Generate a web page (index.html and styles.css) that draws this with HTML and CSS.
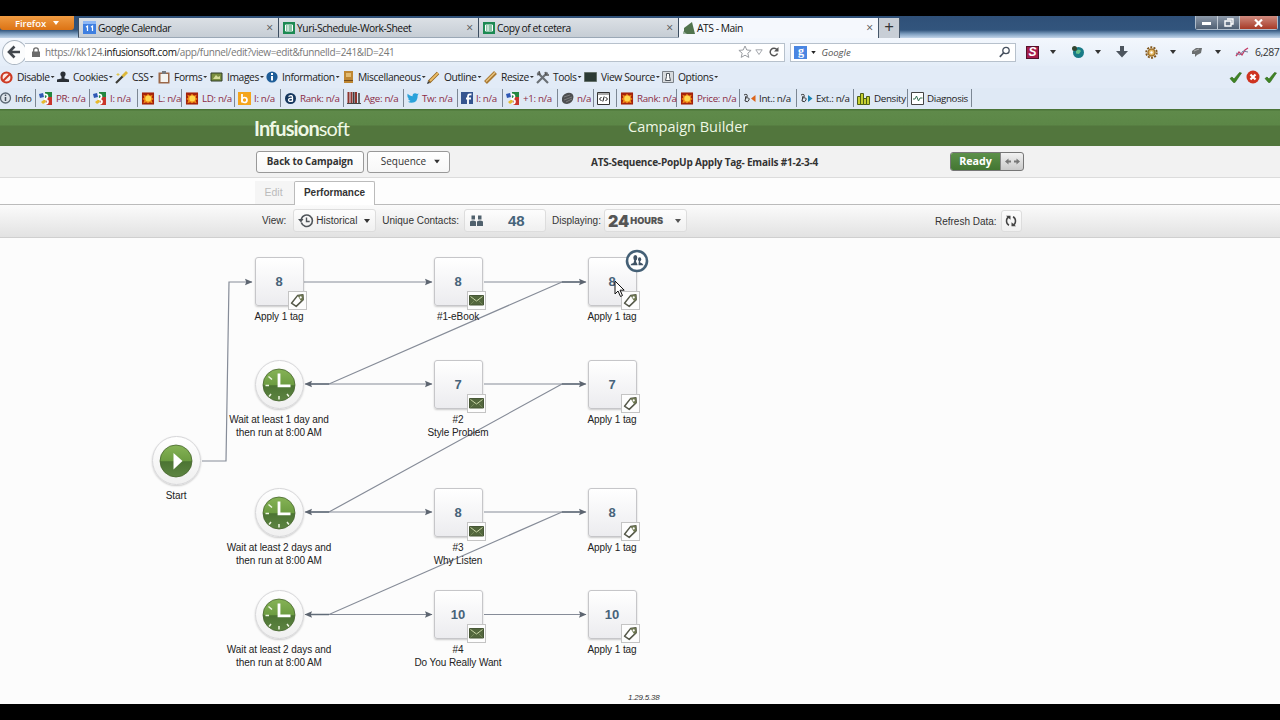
FILE: index.html
```
<!DOCTYPE html>
<html lang="en">
<head>
    <meta charset="UTF-8">
    <title>ATS - Main</title>
    <link rel="stylesheet" href="styles.css">
</head>
<body>
    <!-- Shared icons -->
    <svg class="defs" width="0" height="0">
        <defs>
            <linearGradient id="green" x1="0" y1="0" x2="0" y2="1">
                <stop offset="0" stop-color="#86b356"/>
                <stop offset="0.5" stop-color="#6c9c41"/>
                <stop offset="0.52" stop-color="#4c7433"/>
                <stop offset="1" stop-color="#5d8542"/>
            </linearGradient>
            <marker id="arrow" markerUnits="userSpaceOnUse" markerWidth="8" markerHeight="8" refX="7" refY="4" orient="auto">
                <path d="M0 .8L7.5 4 0 7.2 1.2 4z" fill="#5d6570"/>
            </marker>
            <symbol id="i-tag" viewBox="0 0 17 17">
                <path d="M2.500 11.200L8.500 3.600l5.400-.8.3 4.800-7 6.800z" fill="#fff" stroke="#56594a" stroke-width="1.500" stroke-linejoin="round"/>
                <path d="M8.500 3.400l5.500-.8.300 5-2 2z" fill="#6c7650"/>
                <circle cx="11.700" cy="5.400" r="1.100" fill="#fff"/>
            </symbol>
            <symbol id="i-mail" viewBox="0 0 17 17">
                <path d="M1.500 3.500h14v9.500h-14z" fill="#53673d" stroke="#465635"/>
                <path d="M2.500 4.500l6 4.500 6-4.500" fill="none" stroke="#c6d3a4"/>
                <path d="M2.500 12.500l4-4M14.500 12.500l-4-4" fill="none" stroke="#8a9c6c" stroke-width=".6"/>
            </symbol>
            <symbol id="i-clock" viewBox="0 0 34 34">
                <circle cx="17" cy="17" r="16" fill="url(#green)" stroke="#48662f" stroke-width=".8"/>
                <path d="M17 5.500v12.300h11.500" fill="none" stroke="#fff" stroke-width="2.800"/>
                <path d="M3.500 17.500h3.500M6.500 8.500l3.500 3M17 28v3.500M9 26l-1.900 2.500M25 26l1.900 2.500" stroke="#eef5e2" stroke-width="1.500"/>
            </symbol>
            <symbol id="i-play" viewBox="0 0 34 34">
                <circle cx="17" cy="17" r="16" fill="url(#green)" stroke="#48662f" stroke-width=".8"/>
                <path d="M14.500 9v16.500L23.500 17z" fill="#fff"/>
            </symbol>
            <symbol id="i-sheet" viewBox="0 0 12 12">
                <path d="M0 0h12v12H0z" fill="#1d8a53"/>
                <path d="M2.500 3h7v6h-7zM2.500 5h7M2.500 7h7M5 3v6" fill="none" stroke="#fff"/>
            </symbol>
            <symbol id="i-google" viewBox="0 0 14 13">
                <path d="M6 0h7v7H6z" fill="#23863f"/>
                <path d="M8 5h5v8H7z" fill="#c9352b"/>
                <path d="M0 2l4-1 1 4-4 1z" fill="#2f58b5"/>
                <path d="M2 10l4-3 1 3-3 2z" fill="#e7b92c"/>
                <path d="M5 2.500q3.500-.5 3.500 2T5 7q4 .5 4 2.500T6.500 12" fill="none" stroke="#fff" stroke-width="1.700"/>
            </symbol>
            <symbol id="i-flare" viewBox="0 0 14 14">
                <path d="M.5.500h13v13H.5z" fill="#a5220b"/>
                <path d="M2 3l3 1 2-2 2 2 3-1-1 3 2 1.500-2 1.500 1 3-3-1-2 1-2-1-3 1 1-3-2-1.500L3 6z" fill="#f08a16"/>
                <circle cx="7.300" cy="7" r="3.200" fill="#ffd84e"/>
            </symbol>
            <symbol id="i-check" viewBox="0 0 13 13">
                <path d="M1 7.500l2-1.500 2 2L10.500 1.500 12.500 2 6 11.500H4.500z" fill="#3f8424" stroke="#2f671a" stroke-width=".6"/>
            </symbol>
            <symbol id="i-down" viewBox="0 0 6 4">
                <path d="M0 0h6L3 4z" fill="currentColor"/>
            </symbol>
        </defs>
    </svg>

    <div class="screen">
        <!-- Browser tabs -->
        <div class="tabstrip">
            <div class="firefox">Firefox <svg width="6" height="4"><use href="#i-down"/></svg></div>
            <div class="tab">
                <svg width="13" height="13" viewBox="0 0 13 13"><path d="M0 0h13v13H0z" fill="#3f7fe0"/><path d="M0 0h13v3H0z" fill="#8db7f5"/><path d="M3 6l1.500-1v5M8 6l1.500-1v5" fill="none" stroke="#fff" stroke-width="1.200"/></svg>
                <span>Google Calendar</span><i>×</i>
            </div>
            <div class="tab">
                <svg width="12" height="12"><use href="#i-sheet"/></svg>
                <span>Yuri-Schedule-Work-Sheet</span><i>×</i>
            </div>
            <div class="tab">
                <svg width="12" height="12"><use href="#i-sheet"/></svg>
                <span>Copy of et cetera</span><i>×</i>
            </div>
            <div class="tab active">
                <svg width="12" height="12" viewBox="0 0 12 12"><path d="M1 12V6l8-6 3 12z" fill="#51744e"/><path d="M0 9l4 3H0z" fill="#9bb2a0"/></svg>
                <span>ATS - Main</span><i>×</i>
            </div>
            <div class="new-tab">+</div>
            <div class="window-buttons">
                <span><svg width="9" height="8"><path d="M0 3h9v3H0z" fill="#fff"/></svg></span>
                <span><svg width="10" height="9"><path d="M3 1h6v5H7M1 3h6v5H1z" fill="none" stroke="#fff" stroke-width="1.400"/></svg></span>
                <span class="close"><svg width="9" height="8"><path d="M1 .5l7 7M8 .5l-7 7" stroke="#fff" stroke-width="2.200"/></svg></span>
            </div>
        </div>

        <!-- Address bar -->
        <div class="navbar">
            <div class="back"><svg width="14" height="14" viewBox="0 0 14 14"><path d="M7.500 1.500L2 7l5.500 5.500M2 7h11" fill="none" stroke="#41464c" stroke-width="2.600"/></svg></div>
            <div class="url">
                <svg width="8" height="10" viewBox="0 0 8 10"><path d="M0 4.500h8V10H0z" fill="#6c6c6c"/><path d="M1.700 5V3q0-2.200 2.300-2.200T6.300 3v2" fill="none" stroke="#6c6c6c" stroke-width="1.300"/></svg>
                <span>https://kk124.<b>infusionsoft.com</b>/app/funnel/edit?view=edit&amp;funnelId=241&amp;ID=241</span>
                <svg class="star" width="14" height="14" viewBox="0 0 14 14"><path d="M7 1l1.800 4 4.300.4-3.300 2.800 1 4.200L7 10.200l-3.800 2.200 1-4.200L.9 5.400 5.200 5z" fill="#fff" stroke="#9a9da2"/></svg>
                <svg width="8" height="7" viewBox="0 0 8 7"><path d="M.8.800h6.400L4 5.500z" fill="none" stroke="#a5a8ad"/></svg>
                <svg width="10" height="10" viewBox="0 0 10 10"><path d="M8.500 6.500A3.800 3.800 0 1 1 8 2.700" fill="none" stroke="#555" stroke-width="1.500"/><path d="M9.500 0v4.500H5z" fill="#555"/></svg>
            </div>
            <div class="search">
                <div class="g">g</div>
                <svg width="5" height="3"><use href="#i-down"/></svg>
                <em>Google</em>
                <svg width="12" height="12" viewBox="0 0 12 12"><circle cx="7" cy="4.500" r="3.200" fill="none" stroke="#46505e" stroke-width="1.300"/><path d="M4.500 7L.8 10.800" stroke="#46505e" stroke-width="1.700"/></svg>
            </div>
            <div class="addons">
                <div class="s-icon">S</div>
                <svg width="6" height="4"><use href="#i-down"/></svg>
                <svg width="14" height="14" viewBox="0 0 14 14"><circle cx="7.500" cy="7.500" r="5.500" fill="#197b87"/><path d="M5 6q3-3 5 0l-2 3-3-.5z" fill="#65c08b"/><circle cx="3.500" cy="3.500" r="2.500" fill="#33452f"/></svg>
                <svg width="6" height="4"><use href="#i-down"/></svg>
                <svg width="12" height="12" viewBox="0 0 12 12"><path d="M4 0h4v5h4l-6 6.500L0 5h4z" fill="#4d555e"/></svg>
                <svg width="13" height="13" viewBox="0 0 13 13"><circle cx="6.500" cy="6.500" r="5.300" fill="none" stroke="#80561c" stroke-width="1.800" stroke-dasharray="2 1.300"/><circle cx="6.500" cy="6.500" r="3.500" fill="#e3b763" stroke="#a3742b" stroke-width="1.500"/><circle cx="6.500" cy="6.500" r="1.200" fill="#fff"/></svg>
                <svg width="6" height="4"><use href="#i-down"/></svg>
                <svg width="12" height="10" viewBox="0 0 12 10"><path d="M1 4l4-3 6 0-1 5-4 2-2 2 0-3-3 0z" fill="#6c6f70"/><path d="M3 4l5-2" stroke="#aaa"/></svg>
                <svg width="6" height="4"><use href="#i-down"/></svg>
                <svg width="14" height="11" viewBox="0 0 14 11"><path d="M1 9l3-4 3 3 3-5 3-2" fill="none" stroke="#c23a64" stroke-width="1.300"/><path d="M1 6l4 2 3-4 5 1" fill="none" stroke="#777d9c"/></svg>
                <span>6,287</span>
            </div>
        </div>

        <!-- Web developer toolbar -->
        <div class="devbar">
            <div><svg width="13" height="13" viewBox="0 0 13 13"><circle cx="6.500" cy="6.500" r="5" fill="#fbe9e5" stroke="#cd3a23" stroke-width="2.200"/><path d="M3 10l7-7" stroke="#cd3a23" stroke-width="2"/></svg>Disable<s></s></div>
            <div><svg width="12" height="12" viewBox="0 0 12 12"><circle cx="6" cy="3" r="2.600" fill="#2a2f35"/><path d="M4.500 5h3v2.500l4.500 1V11H0V8.500l4.500-1z" fill="#2a2f35"/></svg>Cookies<s></s></div>
            <div><svg width="13" height="13" viewBox="0 0 13 13"><path d="M1 12L8 5" stroke="#3b3b35" stroke-width="2.200"/><path d="M7.500 5.500L12 1" stroke="#dcb73a" stroke-width="2.800"/><path d="M3 2v3M1.500 3.500h3" stroke="#dfc54f"/></svg>CSS<s></s></div>
            <div><svg width="12" height="13" viewBox="0 0 12 13"><path d="M.5 1.500h11v11H.5z" fill="#9b6748"/><path d="M2.500 3h7.500v8H2.500z" fill="#f4f4f1"/><path d="M4 0h4v3H4z" fill="#767b80"/></svg>Forms<s></s></div>
            <div><svg width="13" height="10" viewBox="0 0 13 10"><path d="M1 1h11v8H1z" fill="#7a8f40" stroke="#2f3c28"/><path d="M3 7l3-4 2 2 2-1v3z" fill="#d4dc9a"/></svg>Images<s></s></div>
            <div><svg width="12" height="12" viewBox="0 0 12 12"><circle cx="6" cy="6" r="5.600" fill="#1e5d98"/><path d="M5 5h2v4.500H5zM5 2h2v2H5z" fill="#fff"/></svg>Information<s></s></div>
            <div><svg width="11" height="12" viewBox="0 0 11 12"><path d="M1 0h9v12H1z" fill="#bf8733"/><path d="M3 2h5v4H3z" fill="#e2bb72"/><path d="M1 9.500h9" stroke="#744b19"/></svg>Miscellaneous<s></s></div>
            <div><svg width="13" height="13" viewBox="0 0 13 13"><path d="M2 11l9-9" stroke="#8e621f" stroke-width="3.400"/><path d="M3 10l8-8" stroke="#edbd65" stroke-width="1.800"/><path d="M0 13l1-3 2 2z" fill="#333"/></svg>Outline<s></s></div>
            <div><svg width="13" height="13" viewBox="0 0 13 13"><path d="M1.500 11.500l10-10" stroke="#a87832" stroke-width="4"/><path d="M2 10.500l9-9" stroke="#e9c480" stroke-width="1.500"/></svg>Resize<s></s></div>
            <div><svg width="13" height="13" viewBox="0 0 13 13"><path d="M1.500 1.500L12 12M11.500 1.500L1 12" stroke="#6b7075" stroke-width="2.200"/><path d="M9 1l1 3 3 0M1 4l3-1-1-3" fill="none" stroke="#555" stroke-width="1.300"/></svg>Tools<s></s></div>
            <div><svg width="13" height="10" viewBox="0 0 13 10"><path d="M.5.500h12v9H.5z" fill="#2b3a34" stroke="#64706a"/></svg>View Source<s></s></div>
            <div><svg width="12" height="12" viewBox="0 0 12 12"><path d="M.5.500h11v11H.5z" fill="#d7dadd" stroke="#7b8188"/><path d="M4.500 2.500h3v3l1 4h-5l1-4z" fill="#fff" stroke="#4d535a"/></svg>Options<s></s></div>
            <div class="validate">
                <svg width="13" height="13"><use href="#i-check"/></svg>
                <svg width="14" height="14" viewBox="0 0 14 14"><circle cx="7" cy="7" r="6.500" fill="#ce3320"/><path d="M4.500 4.500l5 5M9.500 4.500l-5 5" stroke="#fff" stroke-width="2.200"/></svg>
                <svg width="13" height="13"><use href="#i-check"/></svg>
            </div>
        </div>

        <!-- SEO toolbar -->
        <div class="seobar">
            <div class="dark"><svg width="12" height="12" viewBox="0 0 12 12"><circle cx="5.500" cy="6" r="5" fill="#dfe5ec" stroke="#5b6774" stroke-width="1.300"/><path d="M5.500 5v4M5.500 2.500v1.500" stroke="#45515d" stroke-width="1.500"/></svg>Info</div>
            <div><svg width="14" height="13"><use href="#i-google"/></svg>PR: n/a</div>
            <div><svg width="14" height="13"><use href="#i-google"/></svg>I: n/a</div>
            <div><svg width="14" height="13"><use href="#i-flare"/></svg>L: n/a</div>
            <div><svg width="14" height="13"><use href="#i-flare"/></svg>LD: n/a</div>
            <div><svg width="13" height="13" viewBox="0 0 13 13"><path d="M0 0h13v13H0z" fill="#f4a51c"/><path d="M4 2v8.500" stroke="#fff" stroke-width="1.800"/><circle cx="6.500" cy="8" r="2.500" fill="none" stroke="#fff" stroke-width="1.700"/></svg>I: n/a</div>
            <div><svg width="13" height="13" viewBox="0 0 13 13"><circle cx="6.500" cy="6.500" r="5.500" fill="#15375e"/><path d="M4.500 4.500q4-2 4 1V9q-4 1-4-1t4-1.500" fill="none" stroke="#fff" stroke-width="1.300"/></svg>Rank: n/a</div>
            <div><svg width="14" height="12" viewBox="0 0 14 12"><path d="M1.500 0v11M4.500 0v11M9 0v11" stroke="#8f352e" stroke-width="2"/><path d="M6.800 0v11M12 1v10" stroke="#393939" stroke-width="1.500"/><path d="M0 11.500h14" stroke="#444"/></svg>Age: n/a</div>
            <div><svg width="12" height="10" viewBox="0 0 12 10"><path d="M.5.800q2.500 2.500 5 2.400Q5.500.5 8 .3q1.500 0 2 .8l1.700-.5-1 1.600q.2 7.400-6 7.600-2.300 0-4.300-1.200 2 .2 3-.9Q1.400 7.500 1 5.500h1.200Q.3 4.500.4 2.900z" fill="#2ba2da"/></svg>Tw: n/a</div>
            <div><svg width="12" height="12" viewBox="0 0 12 12"><path d="M0 0h12v12H0z" fill="#34548f"/><path d="M10.500 2.500Q7 1.800 7 4.500V12M5 6.500h5" fill="none" stroke="#fff" stroke-width="1.800"/></svg>I: n/a</div>
            <div><svg width="14" height="13"><use href="#i-google"/></svg>+1: n/a</div>
            <div><svg width="13" height="13" viewBox="0 0 13 13"><path d="M1 9Q0 3 6 1q6-1 6.500 4Q12 11 6 12q-4 0-5-3z" fill="#4d4f51"/><path d="M3 5l6-2M3 8l8-3M5 10l6-3" stroke="#888" stroke-width=".8"/></svg>n/a</div>
            <div class="code"><svg width="13" height="13" viewBox="0 0 13 13"><path d="M.5.500h12v12H.5z" fill="#fff" stroke="#333"/><path d="M.5 2h12" stroke="#555"/><path d="M4.500 5L2.500 7l2 2M8.500 5l2 2-2 2M7.200 4.500l-1.400 5" fill="none" stroke="#111"/></svg></div>
            <div><svg width="14" height="13"><use href="#i-flare"/></svg>Rank: n/a</div>
            <div><svg width="14" height="13"><use href="#i-flare"/></svg>Price: n/a</div>
            <div class="dark"><svg width="13" height="11" viewBox="0 0 13 11"><path d="M1 2q4-2 3 2M2 5q5-1 4 2t-4 1l1-5" fill="none" stroke="#333"/><path d="M12.500 2v7L8 5.500z" fill="#dc651b"/></svg>Int.: n/a</div>
            <div class="dark"><svg width="13" height="11" viewBox="0 0 13 11"><path d="M1 2q4-2 3 2M2 5q5-1 4 2t-4 1l1-5" fill="none" stroke="#333"/><path d="M8 2v7l4.500-3.500z" fill="#1984b4"/></svg>Ext.: n/a</div>
            <div class="dark"><svg width="14" height="13" viewBox="0 0 14 13"><path d="M.5 4.500h3v8h-3zM3.500 1.500h3v11h-3zM6.500 6.500h3v6h-3zM9.500 4.500h3v8h-3z" fill="#c6cf31" stroke="#4d5e18"/></svg>Density</div>
            <div class="dark"><svg width="13" height="13" viewBox="0 0 13 13"><path d="M.5.500h12v12H.5z" fill="#fff" stroke="#444"/><path d="M2 7h2l1.500-3 2 5L9 6h2.500" fill="none" stroke="#356e51"/></svg>Diagnosis</div>
        </div>

        <!-- Application -->
        <header class="app-header">
            <div class="logo"><b>Infusion</b>soft</div>
            <h1>Campaign Builder</h1>
        </header>

        <div class="title-bar">
            <button class="btn bold">Back to Campaign</button>
            <button class="btn sequence">Sequence <svg width="6" height="5" viewBox="0 0 6 4"><use href="#i-down"/></svg></button>
            <h2>ATS-Sequence-PopUp Apply Tag- Emails #1-2-3-4</h2>
            <div class="status">
                <span>Ready</span>
                <div class="toggle"><svg width="15" height="7" viewBox="0 0 15 7"><path d="M0 3.500L3.500.500v2H6v2H3.500v2zM15 3.500L11.500.500v2H9v2h2.500v2z" fill="#777"/></svg></div>
            </div>
        </div>

        <div class="page-tabs">
            <div class="page-tab">Edit</div>
            <div class="page-tab current">Performance</div>
        </div>

        <div class="filters">
            <label>View:</label>
            <div class="box historical">
                <svg width="16" height="14" viewBox="0 0 16 14"><path d="M3.300 8.500A5.700 5.700 0 1 0 3.300 5" fill="none" stroke="#50555a" stroke-width="1.600"/><path d="M0 5h5.500L3 8.500z" fill="#50555a"/><path d="M8.500 3.500V7.500h3.200" fill="none" stroke="#50555a" stroke-width="1.400"/></svg>
                <span>Historical</span>
                <svg width="6" height="4"><use href="#i-down"/></svg>
            </div>
            <label>Unique Contacts:</label>
            <div class="box contacts">
                <svg width="13" height="12" viewBox="0 0 13 12"><path d="M1.500.500h3.500v4H1.500zM8 .500h3.500v4H8zM0 6.500q3-2 6 0V11H0zM7 6.500q3-2 6 0V11H7z" fill="#50616d"/></svg>
                <strong>48</strong>
            </div>
            <label>Displaying:</label>
            <div class="box hours"><b>24</b><span>HOURS</span><svg width="6" height="4"><use href="#i-down"/></svg></div>
            <div class="refresh">
                <label>Refresh Data:</label>
                <div class="box"><svg width="12" height="12" viewBox="0 0 12 12"><path d="M4 10.200Q1.500 9 1.500 6t2.300-4M8 1.800Q10.500 3 10.500 6T8.200 10" fill="none" stroke="#444" stroke-width="1.500"/><path d="M1 .800h4.500v4zM11 11.200H6.500v-4z" fill="#444"/></svg></div>
            </div>
        </div>

        <!-- Campaign canvas -->
        <main class="canvas">
            <svg class="wires" width="1280" height="466" viewBox="0 238 1280 466">
                <path d="M202 461H226L229 282H252"/>
                <path d="M304 282H432"/>
                <path d="M484 282H586"/>
                <path d="M329 384H432"/>
                <path d="M484 384H586"/>
                <path d="M329 512H432"/>
                <path d="M484 512H586"/>
                <path d="M329 614.500H432"/>
                <path d="M484 614.500H586"/>
                <path d="M562 282L329 384H305"/>
                <path d="M562 384L329 512H305"/>
                <path d="M562 512L329 614.500H305"/>
                <path class="joint" d="M562 282h18M562 384h18M562 512h18M329 384h-18M329 512h-18M329 614.500h-18"/>
            </svg>

            <div class="node round start"><div class="shape"><svg width="34" height="34"><use href="#i-play"/></svg></div><p>Start</p></div>

            <div class="node col-1 row-1"><div class="shape">8<span><svg width="17" height="17"><use href="#i-tag"/></svg></span></div><p>Apply 1 tag</p></div>
            <div class="node col-2 row-1"><div class="shape">8<span><svg width="17" height="17"><use href="#i-mail"/></svg></span></div><p>#1-eBook</p></div>
            <div class="node col-3 row-1">
                <div class="shape">8<span><svg width="17" height="17"><use href="#i-tag"/></svg></span></div><p>Apply 1 tag</p>
                <svg class="people" width="24" height="24" viewBox="0 0 24 24"><circle cx="12" cy="12" r="10" fill="#fff" stroke="#446076" stroke-width="2.600"/><ellipse cx="10.300" cy="8.800" rx="2" ry="2.700" fill="#3f5264"/><ellipse cx="14.600" cy="10.300" rx="1.600" ry="2.100" fill="#3f5264"/><path d="M9.600 10h1.500v2.700l1.400 2.800v.8h-7q.3-1.800 3-2.300zM14 11h1.200v2.500q2.500.5 3.300 2.800h-5v-1.500z" fill="#3f5264"/></svg>
            </div>

            <div class="node round col-1 row-2"><div class="shape"><svg width="34" height="34"><use href="#i-clock"/></svg></div><p>Wait at least 1 day and<br>then run at 8:00 AM</p></div>
            <div class="node col-2 row-2"><div class="shape">7<span><svg width="17" height="17"><use href="#i-mail"/></svg></span></div><p>#2<br>Style Problem</p></div>
            <div class="node col-3 row-2"><div class="shape">7<span><svg width="17" height="17"><use href="#i-tag"/></svg></span></div><p>Apply 1 tag</p></div>

            <div class="node round col-1 row-3"><div class="shape"><svg width="34" height="34"><use href="#i-clock"/></svg></div><p>Wait at least 2 days and<br>then run at 8:00 AM</p></div>
            <div class="node col-2 row-3"><div class="shape">8<span><svg width="17" height="17"><use href="#i-mail"/></svg></span></div><p>#3<br>Why Listen</p></div>
            <div class="node col-3 row-3"><div class="shape">8<span><svg width="17" height="17"><use href="#i-tag"/></svg></span></div><p>Apply 1 tag</p></div>

            <div class="node round col-1 row-4"><div class="shape"><svg width="34" height="34"><use href="#i-clock"/></svg></div><p>Wait at least 2 days and<br>then run at 8:00 AM</p></div>
            <div class="node col-2 row-4"><div class="shape">10<span><svg width="17" height="17"><use href="#i-mail"/></svg></span></div><p>#4<br>Do You Really Want</p></div>
            <div class="node col-3 row-4"><div class="shape">10<span><svg width="17" height="17"><use href="#i-tag"/></svg></span></div><p>Apply 1 tag</p></div>

            <svg class="cursor" width="11" height="18" viewBox="0 0 11 18"><path d="M1 1v13l3-3 2.500 5.500 2-1L6 10.200h4.200z" fill="#fff" stroke="#111"/></svg>
            <div class="version">1.29.5.38</div>
        </main>
    </div>
</body>
</html>
```
FILE: styles.css
```
* {
    box-sizing: border-box;
}

body {
    margin: 0;
    width: 1280px;
    height: 720px;
    overflow: hidden;
    background: #000;
    font-family: "Open Sans", "Noto Sans", sans-serif;
    font-size: 10.5px;
    color: #222;
}

svg {
    display: block;
    flex: none;
}

.defs {
    position: absolute;
}

.screen {
    display: flex;
    flex-direction: column;
    height: 720px;
    padding: 16px 0;
    white-space: nowrap;
}

.screen > * {
    flex: none;
}

/* Browser tabs */
.tabstrip {
    display: flex;
    height: 22px;
    padding-top: 2px;
    background: linear-gradient(#2f5078, #32557d 14px, #7f9fc0 18px, #c3d6ea 22px);
}

.firefox {
    display: flex;
    align-items: center;
    justify-content: center;
    gap: 7px;
    width: 74px;
    height: 14px;
    margin: -2px 4px 0 0;
    background: linear-gradient(#f09b42, #dc7314);
    border-radius: 0 0 3px 3px;
    color: #fff;
    font-weight: 600;
    font-size: 9.5px;
    letter-spacing: -0.1px;
}

.tab {
    display: flex;
    align-items: center;
    gap: 2px;
    width: 200px;
    padding: 0 5px 0 4px;
    background: linear-gradient(#dbe0e5, #c6cdd5);
    border-left: 1px solid #3c4d60;
    border-bottom: 1px solid #9ba8b6;
    color: #111;
}

.tab span {
    flex: 1;
    font-size: 10.3px;
    letter-spacing: -0.45px;
}

.tab i {
    font-style: normal;
    font-size: 12px;
    color: #555;
}

.tab.active {
    background: #f5f8fd;
    border-bottom-color: #f5f8fd;
}

.new-tab {
    width: 22px;
    background: #c8ced6;
    border: solid #45566a;
    border-width: 0 1px;
    font-size: 17px;
    line-height: 18px;
    text-align: center;
    color: #333;
}

.window-buttons {
    display: flex;
    height: 14px;
    margin: -2px 2px 0 auto;
    border: 1px solid #aebccb;
    border-top: 0;
    border-radius: 0 0 3px 3px;
}

.window-buttons span {
    display: flex;
    align-items: center;
    justify-content: center;
    width: 22px;
    background: linear-gradient(#8c99a9, #4f5f73);
    border-right: 1px solid #c1cad4;
}

.window-buttons .close {
    width: 37px;
    background: linear-gradient(#cf8b7f, #a73a27);
    border: 0;
}

/* Address bar */
.navbar {
    display: flex;
    align-items: center;
    height: 28px;
    background: linear-gradient(#f3f7fd, #e4edf8);
}

.back {
    display: flex;
    align-items: center;
    justify-content: center;
    width: 25px;
    height: 25px;
    margin-left: 2px;
    background: #fbfcfd;
    border: 1px solid #a9b4c0;
    border-radius: 50%;
}

.url {
    display: flex;
    align-items: center;
    width: 762px;
    height: 19px;
    margin-left: -2px;
    padding: 0 5px 0 7px;
    background: #fff;
    border: 1px solid #b7c1cc;
    border-left: 0;
    color: #777;
}

.url span {
    flex: 1;
    margin-left: 5px;
    font-size: 10px;
    letter-spacing: -0.36px;
}

.url b {
    font-weight: 400;
    color: #111;
}

.url .star {
    margin-right: 3px;
}

.url .star + svg {
    margin: 0 6px 0 0;
}

.search {
    display: flex;
    align-items: center;
    width: 226px;
    height: 19px;
    margin-left: 5px;
    padding: 0 4px 0 3px;
    background: #fff;
    border: 1px solid #b7c1cc;
}

.search .g {
    width: 13px;
    height: 13px;
    margin-right: 4px;
    background: #4a86e2;
    color: #fff;
    font: bold 12px/10px "Liberation Serif", serif;
    text-align: center;
}

.search em {
    flex: 1;
    margin-left: 5px;
    font-size: 9.5px;
    color: #555;
}

.addons {
    display: grid;
    grid-template-columns: 24px 21px 24px 21px 29px 25px 21px 24px 20px 20px 25px;
    align-items: center;
    margin-left: 10px;
    color: #333;
}

.addons span {
    letter-spacing: -0.5px;
}

.s-icon {
    width: 13px;
    height: 13px;
    background: #a51c4b;
    border: 1px solid #54122b;
    color: #fff;
    font: italic bold 12px/11px "Liberation Sans", sans-serif;
    text-align: center;
}

/* Web developer toolbar */
.devbar {
    display: grid;
    grid-template-columns: 57px 58px 43px 52px 56px 77px 84px 57px 52px 48px 78px 1fr 51px;
    align-items: center;
    height: 22px;
    background: #e2ebf7;
    font-size: 10.3px;
    letter-spacing: -0.4px;
}

.devbar div,
.seobar div {
    display: flex;
    align-items: center;
}

.devbar > div > svg {
    margin-right: 4px;
}

.devbar s {
    width: 4px;
    height: 2px;
    margin-left: 1px;
    background: #333;
    clip-path: polygon(0 0, 100% 0, 50% 100%);
}

.devbar .validate svg {
    margin-right: 4px;
}

/* SEO toolbar */
.seobar {
    display: grid;
    grid-template-columns: 36px 54px 48px 44px 53px 46px 63px 60px 54px 45px 55px 36px 23px 60px 63px 57px 57px 54px 64px;
    height: 21px;
    background: #dfe9f5;
    color: #8b2c46;
    font-size: 9.8px;
    letter-spacing: -0.35px;
}

.seobar div {
    height: 18px;
    border-right: 1px solid #7c8794;
    margin-top: 1px;
}

.seobar svg {
    margin: 0 3px;
}

.seobar div:first-child svg {
    margin-left: 0;
}

.seobar .dark {
    color: #222;
}

/* Green application header */
.app-header {
    display: flex;
    align-items: center;
    height: 37px;
    padding-left: 254px;
    background: linear-gradient(#4b7438 1px, #5f8a4a 2px, #5c8747 16px, #52763d 17px, #52763d);
    color: #eef8e4;
}

.logo {
    width: 374px;
    font: 400 20px/30px Lato, sans-serif;
    letter-spacing: -0.9px;
}

.logo b {
    font-weight: 700;
}

.app-header h1 {
    margin: -2px 0 0;
    font-size: 14.5px;
    font-weight: 400;
}

/* Sequence title and status */
.title-bar {
    display: flex;
    align-items: center;
    height: 32px;
    padding-left: 256px;
    background: #f2f2f2;
    border-bottom: 1px solid #dcdcdc;
}

.btn {
    display: flex;
    align-items: center;
    justify-content: center;
    width: 108px;
    height: 22px;
    padding: 0 0 1px;
    background: linear-gradient(#fff, #f7f7f7);
    border: 1px solid #999;
    border-radius: 3px;
    font: 10px "Open Sans", sans-serif;
    color: #333;
}

.btn.bold {
    font-size: 9.8px;
    font-weight: 700;
    letter-spacing: -0.1px;
}

.sequence {
    gap: 8px;
    width: 83px;
    margin-left: 3px;
    padding-left: 4px;
}

.title-bar h2 {
    width: 359px;
    margin: 0 0 0 141px;
    font-size: 10px;
    font-weight: 700;
    letter-spacing: -0.2px;
    color: #333;
}

.status {
    display: flex;
    width: 74px;
    height: 19px;
    border: 1px solid #777;
    border-radius: 3px;
    overflow: hidden;
    background: linear-gradient(#f2f2f2, #c9c9c9);
}

.status span {
    width: 49px;
    background: linear-gradient(#5c914a, #437632);
    color: #fff;
    font-size: 10.7px;
    font-weight: 700;
    line-height: 17px;
    text-align: center;
}

.toggle {
    display: flex;
    flex: 1;
    align-items: center;
    justify-content: center;
    border-left: 1px solid #888;
}

/* Edit and Performance tabs */
.page-tabs {
    display: flex;
    align-items: flex-end;
    height: 27px;
    padding-left: 255px;
    background: #fdfdfd;
    border-bottom: 1px solid #bbb;
    font-family: "Liberation Sans", Arial, sans-serif;
}

.page-tab {
    width: 39px;
    height: 23px;
    line-height: 23px;
    padding-right: 2px;
    background: #f5f5f5;
    text-align: center;
    color: #bbb;
}

.page-tab.current {
    width: 81px;
    height: 24px;
    margin-bottom: -1px;
    background: #fff;
    border: 1px solid #bbb;
    border-bottom: 0;
    border-radius: 2px 2px 0 0;
    font-weight: 700;
    font-size: 10px;
    line-height: 22px;
    padding: 0;
    color: #333;
}

/* Performance filters */
.filters {
    display: flex;
    height: 33px;
    padding: 4px 0 0 262px;
    background: linear-gradient(#fbfbfb, #e2e2e2);
    border-bottom: 1px solid #cfcfcf;
    font-family: "Liberation Sans", Arial, sans-serif;
    font-size: 10px;
    color: #333;
}

.filters label {
    line-height: 23px;
}

.box {
    display: flex;
    align-items: center;
    height: 23px;
    background: linear-gradient(#fdfdfd, #f0f0f0);
    border: 1px solid #ddd;
    border-radius: 3px;
}

.historical {
    gap: 2px;
    width: 83px;
    margin: 0 6px 0 7px;
    padding-left: 4px;
}

.historical span {
    flex: 1;
}

.historical svg:last-child {
    margin-right: 5px;
}

.contacts {
    width: 82px;
    margin: 0 6px 0 5px;
    padding-left: 5px;
}

.contacts strong {
    margin-left: 25px;
    font-size: 15px;
    color: #45637a;
}

.hours {
    width: 83px;
    margin-left: 3px;
    padding-left: 3px;
    font-family: Inter, sans-serif;
    font-weight: 900;
    font-size: 9.2px;
    color: #555;
}

.hours b {
    margin-right: 1px;
    font-size: 16px;
    font-weight: 900;
}

.hours span {
    flex: 1;
}

.hours svg {
    margin-right: 5px;
}

.refresh {
    display: flex;
    gap: 4px;
    margin: 1px 0 0 248px;
}

.refresh .box {
    width: 21px;
    height: 22px;
    justify-content: center;
}

/* Campaign canvas */
.canvas {
    position: relative;
    height: 466px;
    background: #fcfcfc;
    font-family: "Liberation Sans", Arial, sans-serif;
}

.wires path {
    fill: none;
    stroke: #868c98;
    stroke-width: 1.2;
    marker-end: url(#arrow);
}

.wires .joint {
    stroke: #606b78;
    stroke-width: 1.6;
    marker-end: none;
}

.node {
    position: absolute;
    width: 120px;
    display: flex;
    flex-direction: column;
    align-items: center;
}

.col-1 { left: 219px; }
.col-2 { left: 398px; }
.col-3 { left: 552px; }
.row-1 { top: 19px; }
.row-2 { top: 122px; }
.row-3 { top: 250px; }
.row-4 { top: 352px; }

.start {
    left: 116px;
    top: 198px;
}

.shape {
    position: relative;
    display: flex;
    align-items: center;
    justify-content: center;
    width: 49px;
    height: 49px;
    background: linear-gradient(#fff, #ececef);
    border: 1px solid #c6c6c9;
    border-radius: 3px;
    box-shadow: 0 1px 2px rgba(0, 0, 0, 0.2);
    font-size: 13px;
    font-weight: 700;
    color: #47637a;
}

.round .shape {
    border-color: #d6d6d8;
    border-radius: 50%;
    background: linear-gradient(#fff, #f0f0f0);
}

/* small type badge on the corner of a step */
.shape span {
    position: absolute;
    right: -4px;
    bottom: -5px;
    width: 19px;
    height: 19px;
    background: #fdfdfd;
    border: 1px solid #c4c4c4;
}

.node p {
    margin: 4px 0 0;
    font-size: 10px;
    line-height: 13px;
    letter-spacing: -0.08px;
    text-align: center;
    color: #222;
}

.people {
    position: absolute;
    left: 73px;
    top: -8px;
}

.cursor {
    position: absolute;
    left: 614px;
    top: 42px;
}

.version {
    position: absolute;
    left: 628px;
    top: 455px;
    font-size: 8px;
    font-style: italic;
    letter-spacing: -0.2px;
    color: #333;
}
```
